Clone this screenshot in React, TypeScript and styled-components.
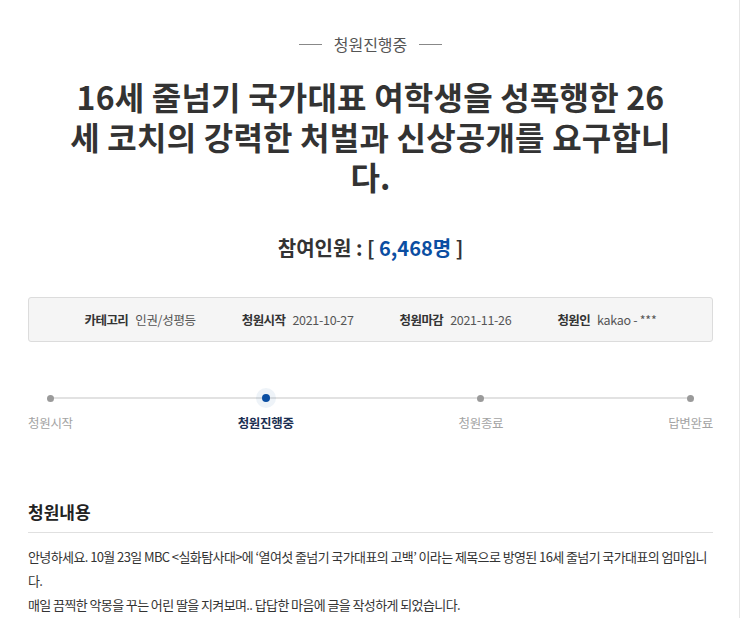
import styled, { createGlobalStyle } from "styled-components";

const GlobalStyle = createGlobalStyle`
    html, body {
        margin: 0;
        padding: 0;
        background: #ffffff;
    }
    body {
        font-family: "Noto Sans CJK KR", "Noto Sans", sans-serif;
        color: #333;
    }
`;

const Page = styled.div`
    box-sizing: border-box;
    width: 740px;
    min-height: 618px;
    padding: 34px 26px 0 28px;
    border-right: 1px solid #e6e6e6;
`;

const StatusTag = styled.div`
    display: flex;
    align-items: center;
    justify-content: center;
    gap: 12px;
    font-size: 16px;
    line-height: 20px;
    color: #555;
    &::before,
    &::after {
        content: "";
        display: block;
        width: 23px;
        height: 1px;
        background: #888;
    }
`;

const Title = styled.h1`
    margin: 22px auto 0;
    font-size: 32px;
    line-height: 40px;
    font-weight: 700;
    color: #333;
    text-align: center;
    letter-spacing: 0.2px;
`;

const Count = styled.div`
    margin-top: 38px;
    text-align: center;
    font-size: 20px;
    line-height: 28px;
    font-weight: 700;
    color: #333;
    strong {
        color: #0b4ea2;
        font-weight: 700;
    }
`;

const InfoBox = styled.div`
    box-sizing: border-box;
    margin-top: 35px;
    height: 45px;
    display: flex;
    align-items: center;
    justify-content: center;
    gap: 46px;
    background: #f5f5f5;
    border: 1px solid #dcdcdc;
    border-radius: 3px;
    font-size: 12.5px;
    letter-spacing: -0.6px;
`;

const InfoItem = styled.div`
    display: flex;
    gap: 7px;
    dt {
        font-weight: 700;
        color: #333;
    }
    dd {
        margin: 0;
        color: #555;
        letter-spacing: -0.3px;
    }
`;

const Steps = styled.ol`
    position: relative;
    margin: 46px 0 0;
    padding: 0;
    list-style: none;
    display: flex;
    justify-content: space-between;
    &::before {
        content: "";
        position: absolute;
        left: 23px;
        right: 23px;
        top: 9px;
        height: 2px;
        background: #e2e2e2;
    }
`;

const Step = styled.li<{ $active?: boolean }>`
    position: relative;
    display: flex;
    flex-direction: column;
    align-items: center;
    gap: 6px;
    font-size: 12.5px;
    line-height: 18px;
    letter-spacing: -0.3px;
    color: ${(p) => (p.$active ? "#1b2f52" : "#a3a3a3")};
    font-weight: ${(p) => (p.$active ? 700 : 400)};
`;

const Dot = styled.span<{ $active?: boolean }>`
    display: flex;
    align-items: center;
    justify-content: center;
    width: 20px;
    height: 20px;
    border-radius: 50%;
    background: ${(p) => (p.$active ? "rgba(11, 78, 162, 0.07)" : "transparent")};
    &::after {
        content: "";
        display: block;
        width: ${(p) => (p.$active ? "8px" : "7px")};
        height: ${(p) => (p.$active ? "8px" : "7px")};
        border-radius: 50%;
        background: ${(p) => (p.$active ? "#0b4ea2" : "#9a9a9a")};
    }
`;

const SectionTitle = styled.h2`
    margin: 68px 0 0;
    padding-bottom: 8px;
    border-bottom: 1px solid #e0e0e0;
    font-size: 17px;
    line-height: 24px;
    font-weight: 700;
    color: #222;
`;

const Body = styled.div`
    margin-top: 12px;
    font-size: 13px;
    line-height: 24px;
    letter-spacing: -0.6px;
    color: #333;
    p {
        margin: 0;
    }
`;

const steps = [
    { label: "청원시작" },
    { label: "청원진행중", active: true },
    { label: "청원종료" },
    { label: "답변완료" },
];

export default function App() {
    return (
        <>
            <GlobalStyle />
            <Page>
                <StatusTag>청원진행중</StatusTag>
                <Title>
                    16세 줄넘기 국가대표 여학생을 성폭행한 26
                    <br />
                    세 코치의 강력한 처벌과 신상공개를 요구합니
                    <br />
                    다.
                </Title>
                <Count>
                    참여인원 : [ <strong>6,468명</strong> ]
                </Count>
                <InfoBox>
                    <InfoItem>
                        <dt>카테고리</dt>
                        <dd>인권/성평등</dd>
                    </InfoItem>
                    <InfoItem>
                        <dt>청원시작</dt>
                        <dd>2021-10-27</dd>
                    </InfoItem>
                    <InfoItem>
                        <dt>청원마감</dt>
                        <dd>2021-11-26</dd>
                    </InfoItem>
                    <InfoItem>
                        <dt>청원인</dt>
                        <dd>kakao - ***</dd>
                    </InfoItem>
                </InfoBox>
                <Steps>
                    {steps.map((s) => (
                        <Step key={s.label} $active={s.active}>
                            <Dot $active={s.active} />
                            {s.label}
                        </Step>
                    ))}
                </Steps>
                <SectionTitle>청원내용</SectionTitle>
                <Body>
                    <p>
                        안녕하세요. 10월 23일 MBC &lt;실화탐사대&gt;에 ‘열여섯 줄넘기 국가대표의 고백’ 이라는 제목으로 방영된 16세 줄넘기 국가대표의 엄마입니다.
                    </p>
                    <p>매일 끔찍한 악몽을 꾸는 어린 딸을 지켜보며.. 답답한 마음에 글을 작성하게 되었습니다.</p>
                </Body>
            </Page>
        </>
    );
}
